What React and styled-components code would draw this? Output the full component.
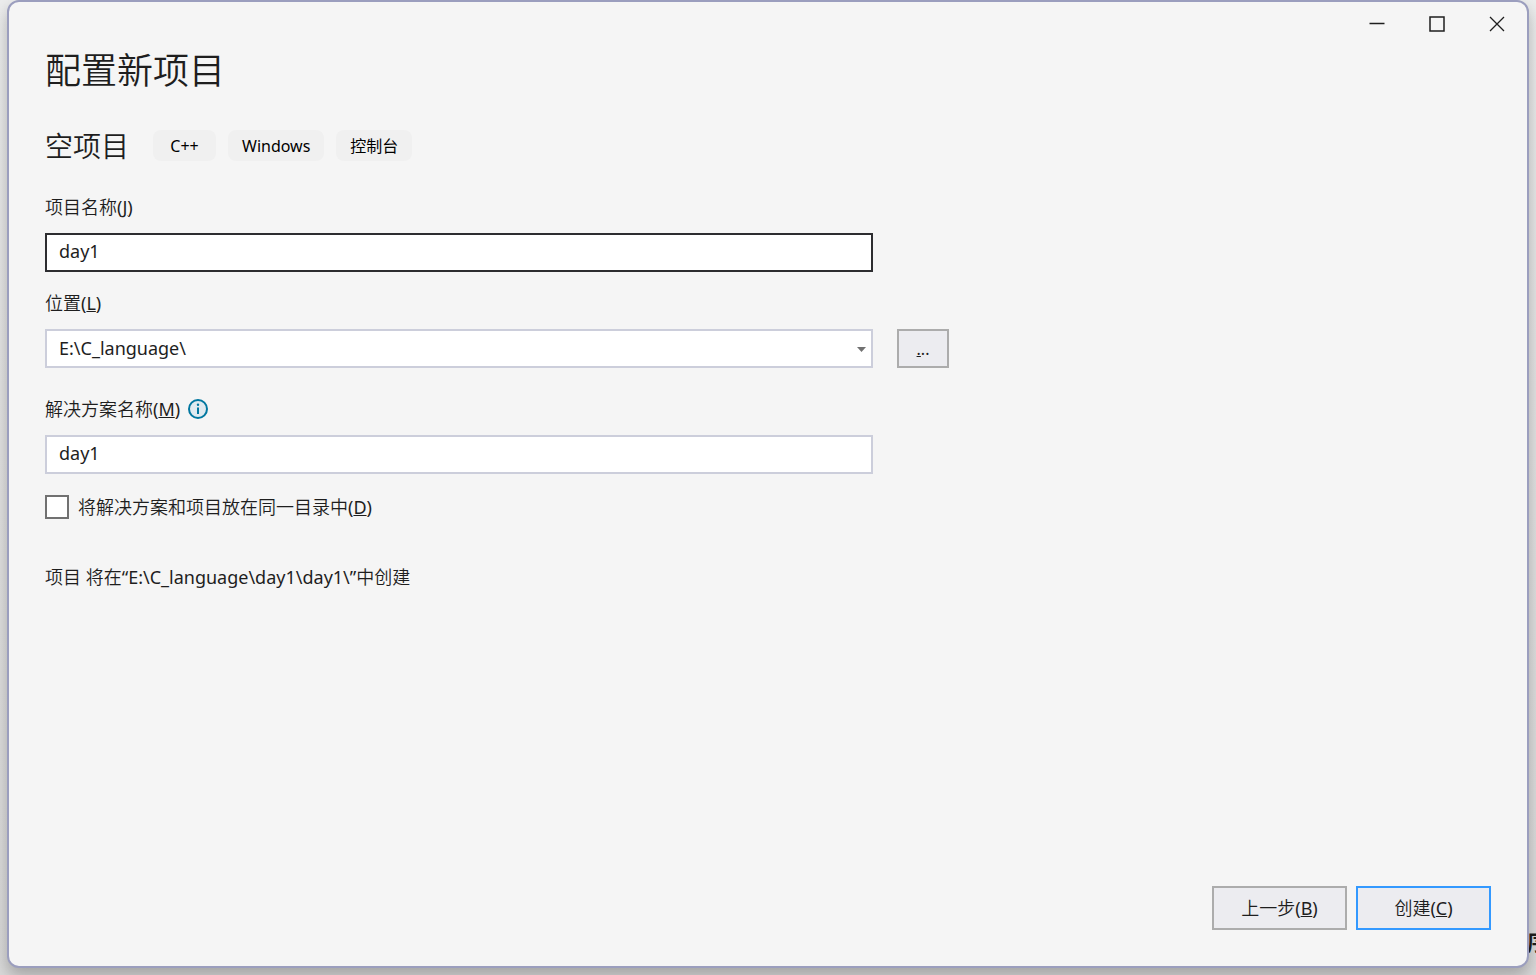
import React, { useState } from 'react';
import styled, { createGlobalStyle } from 'styled-components';

const GlobalStyle = createGlobalStyle`
  * {
    box-sizing: border-box;
  }

  body {
    margin: 0;
    color: #1e1e1e;
    font-family: 'Noto Sans', 'Noto Sans CJK SC', sans-serif;
    font-size: 18px;
    font-weight: 350;
    line-height: 24px;
  }

  button,
  input,
  select {
    margin: 0;
    color: inherit;
    font: inherit;
  }
`;

const Desktop = styled.div`
  position: relative;
  display: flex;
  min-height: 100vh;
  padding: 0 7px 7px;
  overflow: hidden;
  background: linear-gradient(#eceded, #e4e4e4 40%, #dadada);
`;

const BackgroundText = styled.span`
  position: absolute;
  right: -13px;
  bottom: 22px;
  font-size: 22px;
  font-weight: 700;
`;

const Window = styled.main`
  position: relative;
  display: flex;
  flex: 1;
  flex-direction: column;
  border: 2px solid #9b9ebe;
  border-radius: 12px;
  background: #f5f5f5;
  box-shadow: 0 8px 16px rgba(0, 0, 0, 0.25);
`;

const TitleBar = styled.div`
  display: flex;
  justify-content: flex-end;
`;

const WindowButton = styled.button`
  display: flex;
  justify-content: center;
  align-items: center;
  width: 60px;
  height: 44px;
  padding: 0;
  border: 0;
  background: none;
`;

const Content = styled.form`
  display: flex;
  flex: 1;
  flex-direction: column;
  padding: 0 36px 36px;
`;

const Title = styled.h1`
  margin: 0 0 34px;
  font-size: 36px;
  font-weight: 350;
  line-height: 50px;
`;

const Template = styled.div`
  display: flex;
  align-items: center;
  gap: 12px;
  height: 31px;
  margin-bottom: 34px;
`;

const TemplateName = styled.h2`
  margin: 0 12px 0 0;
  font-size: 28px;
  font-weight: 350;
  line-height: 32px;
`;

const Tag = styled.span`
  min-width: 63px;
  padding: 5px 14px 3px;
  border-radius: 8px;
  background: #f0f0f0;
  color: #000;
  font-size: 16px;
  font-weight: 400;
  line-height: 23px;
  text-align: center;
`;

const Field = styled.div`
  display: flex;
  flex-direction: column;
  gap: 14px;
  width: 100%;
  max-width: 828px;
  margin-bottom: ${({ $space }) => $space}px;
`;

const LabelRow = styled.div`
  display: flex;
  align-items: center;
  gap: 8px;
`;

// the Latin face needs the regular weight to sit evenly beside the lighter Chinese one
const Latin = styled.span`
  font-weight: 400;
`;

const TextBox = styled.input`
  width: 100%;
  height: 39px;
  padding: 0 12px 3px;
  border: 2px solid #cccedb;
  border-radius: 0;
  outline: none;
  background: #fff;
  font-weight: 400;

  &:focus {
    border-color: #2d2d30;
  }
`;

const LocationRow = styled.div`
  display: flex;
  align-items: flex-end;
  gap: 24px;
  margin-bottom: 29px;
`;

const SelectBox = styled.div`
  position: relative;

  svg {
    position: absolute;
    top: 18px;
    right: 7px;
    pointer-events: none;
  }
`;

const Select = styled.select`
  display: block;
  width: 100%;
  height: 39px;
  padding: 0 32px 2px 12px;
  border: 2px solid #cccedb;
  border-radius: 0;
  appearance: none;
  background: #fff;
  font-weight: 400;
`;

const Button = styled.button`
  width: ${({ $small }) => ($small ? 52 : 135)}px;
  height: ${({ $small }) => ($small ? 39 : 44)}px;
  padding: 0;
  border: 2px solid ${({ $primary }) => ($primary ? '#3399ff' : '#acacac')};
  background: #ececf0;
  font-size: ${({ $small }) => ($small ? 16 : 18)}px;
`;

const CheckRow = styled.label`
  display: flex;
  align-items: center;
  gap: 9px;
  margin-bottom: 46px;
`;

const Checkbox = styled.input`
  width: 24px;
  height: 24px;
  border: 2px solid #717171;
  appearance: none;
  background: #fff;

  &:checked {
    box-shadow: inset 0 0 0 4px #fff;
    background: #717171;
  }
`;

const Summary = styled.p`
  margin: 0;
`;

const Footer = styled.footer`
  display: flex;
  justify-content: flex-end;
  gap: 9px;
  margin-top: auto;
`;

const AccessKey = ({ letter }) => (
  <Latin>
    (<u>{letter}</u>)
  </Latin>
);

const InfoIcon = () => (
  <svg width="20" height="20" viewBox="0 0 20 20" role="img" aria-label="信息">
    <circle cx="10" cy="10" r="9" fill="#dfeaf0" stroke="#0077a0" strokeWidth="2" />
    <path d="M10 8.5V15" stroke="#0077a0" strokeWidth="2" />
    <circle cx="10" cy="5.8" r="1.2" fill="#0077a0" />
  </svg>
);

const App = () => {
  const [name, setName] = useState('day1');
  const [solution, setSolution] = useState('day1');
  const [sameFolder, setSameFolder] = useState(false);

  return (
    <>
      <GlobalStyle />
      <Desktop>
        <BackgroundText>序</BackgroundText>
        <Window>
          <TitleBar>
            <WindowButton aria-label="最小化">
              <svg width="16" height="16" viewBox="0 0 16 16">
                <path d="M0.5 7.5H15.5" stroke="#1e1e1e" strokeWidth="1.5" />
              </svg>
            </WindowButton>
            <WindowButton aria-label="最大化">
              <svg width="16" height="16" viewBox="0 0 16 16">
                <rect x="1" y="1" width="14" height="14" fill="none" stroke="#1e1e1e" strokeWidth="1.5" />
              </svg>
            </WindowButton>
            <WindowButton aria-label="关闭">
              <svg width="16" height="16" viewBox="0 0 16 16">
                <path d="M1 1L15 15M15 1L1 15" stroke="#1e1e1e" strokeWidth="1.3" />
              </svg>
            </WindowButton>
          </TitleBar>
          <Content onSubmit={(event) => event.preventDefault()}>
            <Title>配置新项目</Title>
            <Template>
              <TemplateName>空项目</TemplateName>
              <Tag>C++</Tag>
              <Tag>Windows</Tag>
              <Tag>控制台</Tag>
            </Template>
            <Field $space={19}>
              <LabelRow>
                <label htmlFor="name">
                  项目名称
                  <AccessKey letter="J" />
                </label>
              </LabelRow>
              <TextBox id="name" autoFocus value={name} onChange={(event) => setName(event.target.value)} />
            </Field>
            <LocationRow>
              <Field $space={0}>
                <LabelRow>
                  <label htmlFor="location">
                    位置
                    <AccessKey letter="L" />
                  </label>
                </LabelRow>
                <SelectBox>
                  <Select id="location">
                    <option>E:\C_language\</option>
                  </Select>
                  <svg width="9" height="5" viewBox="0 0 9 5">
                    <path d="M0 0H9L4.5 5Z" fill="#717171" />
                  </svg>
                </SelectBox>
              </Field>
              <Button type="button" $small aria-label="浏览">
                <Latin>
                  <u>.</u>..
                </Latin>
              </Button>
            </LocationRow>
            <Field $space={21}>
              <LabelRow>
                <label htmlFor="solution">
                  解决方案名称
                  <AccessKey letter="M" />
                </label>
                <InfoIcon />
              </LabelRow>
              <TextBox id="solution" value={solution} onChange={(event) => setSolution(event.target.value)} />
            </Field>
            <CheckRow>
              <Checkbox
                type="checkbox"
                checked={sameFolder}
                onChange={(event) => setSameFolder(event.target.checked)}
              />
              <span>
                将解决方案和项目放在同一目录中
                <AccessKey letter="D" />
              </span>
            </CheckRow>
            <Summary>
              项目 将在<Latin>“E:\C_language\day1\day1\”</Latin>中创建
            </Summary>
            <Footer>
              <Button type="button">
                上一步
                <AccessKey letter="B" />
              </Button>
              <Button type="submit" $primary>
                创建
                <AccessKey letter="C" />
              </Button>
            </Footer>
          </Content>
        </Window>
      </Desktop>
    </>
  );
};

export default App;
